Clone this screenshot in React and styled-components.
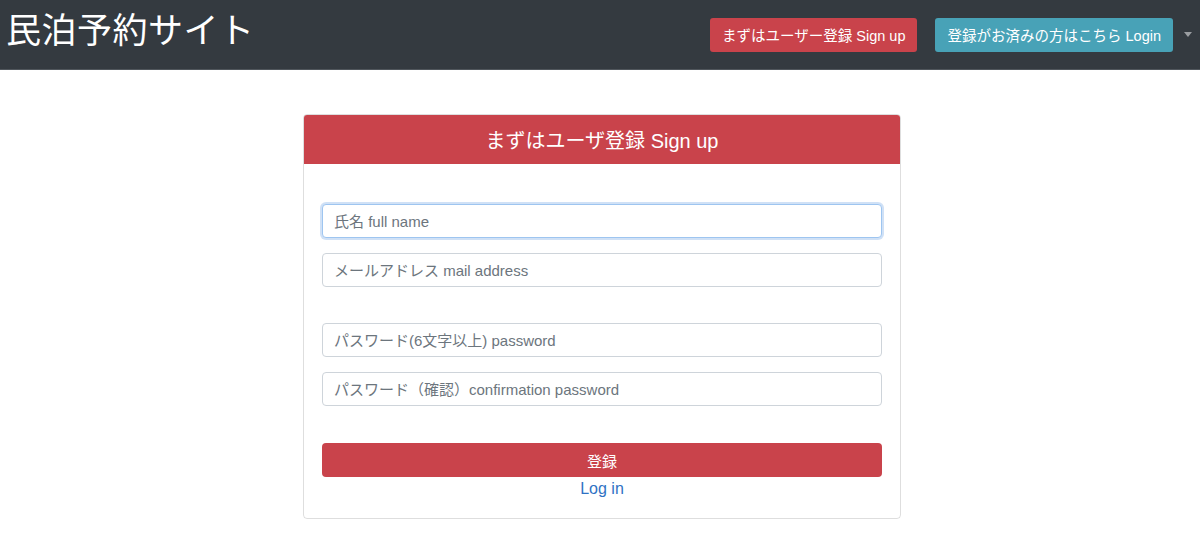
import styled, { createGlobalStyle } from 'styled-components'

const GlobalStyle = createGlobalStyle`
  html, body {
    margin: 0;
    padding: 0;
    background: #ffffff;
    font-family: "Liberation Sans", "Noto Sans CJK JP", sans-serif;
    color: #212529;
  }
  * { box-sizing: border-box; }
`

const Navbar = styled.header`
  height: 70px;
  background-color: #343a40;
  border-bottom: 1px solid #50565c;
  display: flex;
  align-items: center;
  padding: 0 8px 0 6px;
`

const Brand = styled.div`
  color: #ffffff;
  font-size: 35px;
  line-height: 1;
  letter-spacing: 0.5px;
  margin-top: -9px;
  flex: 1;
`

const NavButton = styled.button`
  height: 34px;
  padding: 0 12px;
  border: none;
  border-radius: 3px;
  color: #ffffff;
  font-family: inherit;
  font-size: 14.5px;
  background-color: ${props => props.variant === "info" ? "#48a2b7" : "#c9434b"};
  margin-left: 18px;
  cursor: pointer;
  white-space: nowrap;
`

const Caret = styled.span`
  width: 0;
  height: 0;
  margin-left: 11px;
  border-left: 4.5px solid transparent;
  border-right: 4.5px solid transparent;
  border-top: 5px solid #9a9da1;
`

const Main = styled.main`
  display: flex;
  justify-content: center;
  padding-top: 44px;
  padding-left: 4px;
`

const Card = styled.section`
  width: 598px;
  border: 1px solid rgba(0, 0, 0, 0.13);
  border-radius: 4px;
  overflow: hidden;
`

const CardHeader = styled.div`
  height: 49px;
  background-color: #c9434b;
  color: #ffffff;
  font-size: 20px;
  display: flex;
  align-items: center;
  justify-content: center;
`

const CardBody = styled.form`
  padding: 40px 18px 17px;
  display: flex;
  flex-direction: column;
`

const Input = styled.input`
  height: 34px;
  width: 100%;
  margin-top: ${props => props.gap || 0}px;
  padding: 0 11px;
  font-family: inherit;
  font-size: 15px;
  color: #495057;
  border: 1px solid ${props => props.focused ? "#9ec5f0" : "#ced4da"};
  border-radius: 4px;
  outline: none;
  box-shadow: ${props => props.focused ? "0 0 0 2px rgba(120, 170, 230, 0.35)" : "none"};

  &::placeholder {
    color: #6c757d;
  }
`

const Submit = styled.button`
  height: 34px;
  width: 100%;
  margin-top: 37px;
  border: none;
  border-radius: 4px;
  background-color: #c9434b;
  color: #ffffff;
  font-family: inherit;
  font-size: 15px;
  cursor: pointer;
`

const LoginLink = styled.a`
  align-self: center;
  color: #2f72c4;
  font-size: 16px;
  line-height: 24px;
  text-decoration: none;
`

const App = () => {
  return (
    <>
      <GlobalStyle />
      <Navbar>
        <Brand>民泊予約サイト</Brand>
        <NavButton>まずはユーザー登録 Sign up</NavButton>
        <NavButton variant="info">登録がお済みの方はこちら Login</NavButton>
        <Caret />
      </Navbar>
      <Main>
        <Card>
          <CardHeader>まずはユーザ登録 Sign up</CardHeader>
          <CardBody onSubmit={e => e.preventDefault()}>
            <Input focused placeholder="氏名 full name" />
            <Input gap={15} placeholder="メールアドレス mail address" />
            <Input gap={36} type="password" placeholder="パスワード(6文字以上) password" />
            <Input gap={15} type="password" placeholder="パスワード（確認）confirmation password" />
            <Submit>登録</Submit>
            <LoginLink href="#">Log in</LoginLink>
          </CardBody>
        </Card>
      </Main>
    </>
  )
}

export default App
